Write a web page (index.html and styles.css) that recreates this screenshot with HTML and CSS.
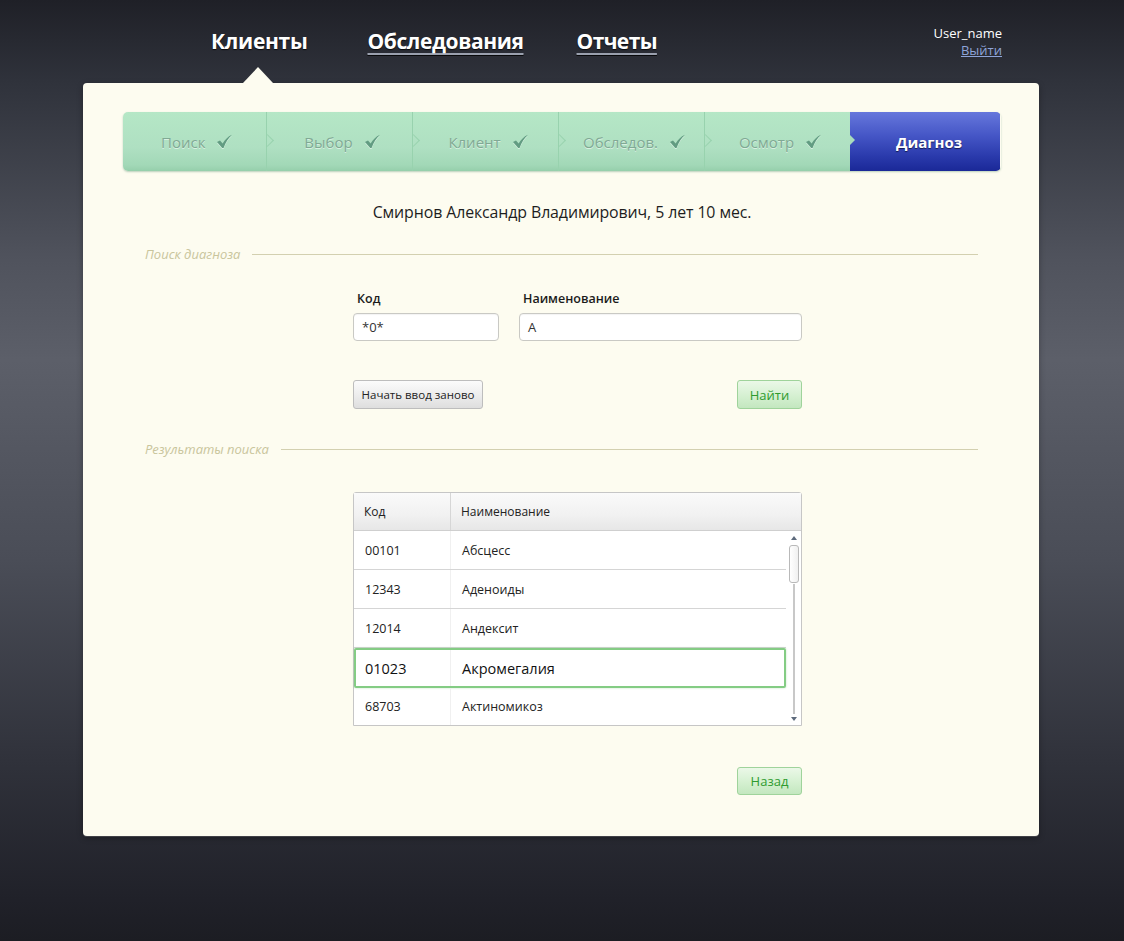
FILE: index.html
```html
<!DOCTYPE html>
<html lang="ru">
<head>
<meta charset="utf-8">
<title>Диагноз</title>
<link rel="stylesheet" href="styles.css">
</head>
<body>
<header class="top">
  <nav class="nav">
    <a class="nav-item active">Клиенты</a>
    <a class="nav-item link">Обследования</a>
    <a class="nav-item link">Отчеты</a>
  </nav>
  <div class="user">
    <div class="user-name">User_name</div>
    <a class="logout">Выйти</a>
  </div>
</header>

<main class="card">
  <div class="steps">
    <div class="step done first"><span>Поиск</span><svg class="check" viewBox="0 0 18 16"><path d="M1 8.5 L4.2 6.8 L7 10.2 C9.5 6 12.5 2.8 17 0.8 C13 4.5 10.2 9 8 15 L6.6 15 Z"/></svg></div>
    <div class="step done"><span>Выбор</span><svg class="check" viewBox="0 0 18 16"><path d="M1 8.5 L4.2 6.8 L7 10.2 C9.5 6 12.5 2.8 17 0.8 C13 4.5 10.2 9 8 15 L6.6 15 Z"/></svg></div>
    <div class="step done"><span>Клиент</span><svg class="check" viewBox="0 0 18 16"><path d="M1 8.5 L4.2 6.8 L7 10.2 C9.5 6 12.5 2.8 17 0.8 C13 4.5 10.2 9 8 15 L6.6 15 Z"/></svg></div>
    <div class="step done"><span>Обследов.</span><svg class="check" viewBox="0 0 18 16"><path d="M1 8.5 L4.2 6.8 L7 10.2 C9.5 6 12.5 2.8 17 0.8 C13 4.5 10.2 9 8 15 L6.6 15 Z"/></svg></div>
    <div class="step done"><span>Осмотр</span><svg class="check" viewBox="0 0 18 16"><path d="M1 8.5 L4.2 6.8 L7 10.2 C9.5 6 12.5 2.8 17 0.8 C13 4.5 10.2 9 8 15 L6.6 15 Z"/></svg></div>
    <div class="step current"><span>Диагноз</span></div>
  </div>

  <h1 class="patient">Смирнов Александр Владимирович, 5 лет 10 мес.</h1>

  <div class="legend"><span>Поиск диагноза</span></div>

  <form class="search">
    <div class="fields">
      <label class="field code">
        <span class="label">Код</span>
        <span class="input">*0*</span>
      </label>
      <label class="field name">
        <span class="label">Наименование</span>
        <span class="input">А</span>
      </label>
    </div>
    <div class="actions">
      <button type="button" class="btn gray">Начать ввод заново</button>
      <button type="button" class="btn green">Найти</button>
    </div>
  </form>

  <div class="legend second"><span>Результаты поиска</span></div>

  <div class="grid">
    <div class="grid-head">
      <div class="c-code">Код</div>
      <div class="c-name">Наименование</div>
    </div>
    <div class="grid-body">
      <div class="rows">
        <div class="row"><div class="c-code">00101</div><div class="c-name">Абсцесс</div></div>
        <div class="row"><div class="c-code">12343</div><div class="c-name">Аденоиды</div></div>
        <div class="row"><div class="c-code">12014</div><div class="c-name">Андексит</div></div>
        <div class="row selected"><div class="c-code">01023</div><div class="c-name">Акромегалия</div></div>
        <div class="row last"><div class="c-code">68703</div><div class="c-name">Актиномикоз</div></div>
      </div>
      <div class="scrollbar">
        <span class="arrow up"></span>
        <span class="thumb"></span>
        <span class="track"></span>
        <span class="arrow down"></span>
      </div>
    </div>
  </div>

  <div class="bottom">
    <button type="button" class="btn green">Назад</button>
  </div>
</main>
</body>
</html>
```

FILE: styles.css
```css
* { box-sizing: border-box; }

html, body { height: 100%; }

body {
  margin: 0;
  min-height: 941px;
  font-family: "Open Sans", "Noto Sans", sans-serif;
  background: linear-gradient(180deg, #1f2027 0px, #2f323b 80px, #50535d 260px, #5c5f69 360px, #4a4d57 560px, #30323b 760px, #202129 900px, #1c1d23 941px);
}

.top {
  height: 83px;
  display: flex;
  justify-content: space-between;
  padding: 0 122px 0 211px;
}

.nav {
  display: flex;
  align-items: flex-start;
  padding-top: 25px;
}

.nav-item {
  position: relative;
  font-family: "Open Sans", sans-serif;
  font-weight: 700;
  font-size: 21px;
  letter-spacing: -0.3px;
  color: #ffffff;
  text-shadow: 0 1px 1px rgba(0,0,0,0.8);
  line-height: 32px;
}

.nav-item.active { margin-right: 60px; }
.nav-item:nth-child(2) { margin-right: 53px; letter-spacing: -0.4px; }
.nav-item:nth-child(3) { letter-spacing: -0.6px; }

.nav-item.link {
  text-decoration: underline;
  text-decoration-color: #9aa0ae;
  text-decoration-thickness: 2px;
  text-underline-offset: 4px;
}

.nav-item.active::after {
  content: "";
  position: absolute;
  left: 32px;
  top: 42px;
  border-left: 15px solid transparent;
  border-right: 15px solid transparent;
  border-bottom: 16px solid #fdfcf0;
}

.user {
  padding-top: 25px;
  text-align: right;
  font-size: 13px;
  line-height: 17px;
}

.user-name { color: #ffffff; }

.logout {
  color: #8ea4d9;
  text-decoration: underline;
}

.card {
  width: 956px;
  margin-left: 83px;
  background: #fdfcf0;
  border-radius: 4px;
  padding: 29px 38px 41px 40px;
  box-shadow: 0 1px 0 rgba(255,255,255,0.15), 0 2px 6px rgba(0,0,0,0.3);
}

/* steps */
.steps {
  display: flex;
  height: 59px;
  border-radius: 5px;
  overflow: hidden;
  box-shadow: 0 1px 2px rgba(60,120,90,0.35);
}

.step {
  position: relative;
  width: 146px;
  display: flex;
  align-items: center;
  justify-content: center;
  gap: 11px;
  font-size: 15px;
  padding-left: 6px;
}

.step.done {
  background: linear-gradient(180deg, #b5e7c6 0%, #afe0c2 60%, #a2d8b7 90%, #95cfab 100%);
  color: #80a994;
  text-shadow: 0 1px 0 rgba(255,255,255,0.55);
  border-left: 1px solid #98d2ae;
}

.step.done.first { border-left: none; width: 143px; padding-left: 38px; justify-content: flex-start; }

.step.done + .step.done::before {
  content: "";
  position: absolute;
  left: -4px;
  top: 24px;
  width: 8px;
  height: 8px;
  border-top: 1px solid #98d2ae;
  border-right: 1px solid #98d2ae;
  transform: rotate(45deg);
  z-index: 2;
}

.step.current {
  width: 150px;
  background: linear-gradient(180deg, #6677dc 0%, #4556c6 40%, #2a3aac 75%, #1a2897 100%);
  color: #ffffff;
  font-weight: 700;
  text-shadow: 0 1px 1px rgba(0,0,20,0.6);
  padding-left: 8px;
}

.step.current::before {
  content: "";
  position: absolute;
  left: 0;
  top: 23px;
  width: 0;
  height: 0;
  border-top: 5px solid transparent;
  border-bottom: 5px solid transparent;
  border-left: 5px solid #a9ddbc;
}

.check {
  width: 17px;
  height: 15px;
  fill: #629c82;
  filter: drop-shadow(0 1px 0 rgba(255,255,255,0.5));
}

.patient {
  margin: 30px 0 0;
  text-align: center;
  font-weight: 400;
  font-size: 15.9px;
  line-height: 22px;
  color: #1e1e1e;
  letter-spacing: -0.1px;
}

.legend {
  margin: 22px 23px 0 22px;
  display: flex;
  align-items: center;
  gap: 12px;
  height: 18px;
  font-size: 13px;
  font-style: italic;
  color: #c9c59c;
}

.legend::after {
  content: "";
  flex: 1;
  height: 1px;
  background: #d3d0b0;
}

.legend.second { margin-top: 31px; }

.search {
  width: 449px;
  margin: 28px 0 0 230px;
}

.fields {
  display: flex;
  gap: 20px;
}

.field { display: flex; flex-direction: column; gap: 6px; }
.field.code { width: 146px; }
.field.name { flex: 1; }

.label {
  font-size: 12.5px;
  font-weight: 600;
  line-height: 16px;
  padding-left: 4px;
  color: #1b1b1b;
}

.input {
  height: 28px;
  background: #ffffff;
  border: 1px solid #c9c9c4;
  border-radius: 4px;
  padding: 0 8px;
  font-size: 13px;
  line-height: 26px;
  color: #333;
  box-shadow: inset 0 1px 1px rgba(0,0,0,0.05);
}

.actions {
  display: flex;
  justify-content: space-between;
  margin-top: 39px;
}

.btn {
  font-family: "Open Sans", sans-serif;
  height: 29px;
  border-radius: 3px;
  cursor: pointer;
  padding: 0;
}

.btn.gray {
  width: 130px;
  font-size: 11.5px;
  color: #222;
  border: 1px solid #bdbdbd;
  background: linear-gradient(180deg, #fbfbfb 0%, #ececec 55%, #dedede 100%);
}

.btn.green {
  width: 65px;
  font-size: 13px;
  color: #2f9b2f;
  border: 1px solid #9fd39b;
  background: linear-gradient(180deg, #ebf8e8 0%, #d5f0d1 55%, #c3e7bf 100%);
}

.grid {
  width: 449px;
  margin: 34px 0 0 230px;
  border: 1px solid #c6c6c6;
  border-radius: 3px 3px 0 0;
  background: #ffffff;
}

.grid-head {
  display: flex;
  height: 38px;
  background: linear-gradient(180deg, #fafafa 0%, #f1f1f1 60%, #e7e7e7 100%);
  border-bottom: 1px solid #cfcfcf;
  font-size: 12px;
  color: #222;
}

.grid-head .c-code {
  width: 97px;
  border-right: 1px solid #d6d6d6;
  padding-left: 10px;
  line-height: 37px;
}

.grid-head .c-name { padding-left: 10px; line-height: 37px; }

.grid-body {
  display: flex;
  height: 194px;
}

.rows { flex: 1; }

.row {
  display: flex;
  height: 39px;
  border-bottom: 1px solid #d5d5d5;
  font-size: 12.5px;
  color: #222;
  align-items: center;
}

.row .c-code {
  width: 97px;
  height: 100%;
  display: flex;
  align-items: center;
  padding-left: 11px;
  border-right: 1px solid #f0f0f0;
}

.row .c-name { padding-left: 11px; }

.row.selected {
  height: 40px;
  border: 2px solid #84cc84;
  border-radius: 2px;
  font-size: 14.5px;
  box-shadow: 0 0 2px rgba(80,180,80,0.4);
  color: #111;
}

.row.selected .c-code { width: 95px; padding-left: 9px; }

.row.last { border-bottom: none; height: 37px; }

.scrollbar {
  width: 15px;
  display: flex;
  flex-direction: column;
  align-items: center;
  padding: 3px 0 2px;
}

.arrow {
  width: 0;
  height: 0;
  border-left: 3px solid transparent;
  border-right: 3px solid transparent;
}

.arrow.up { border-bottom: 4px solid #5d6a7c; margin-top: 2px; }
.arrow.down { border-top: 4px solid #5d6a7c; margin-bottom: 2px; }

.thumb {
  width: 10px;
  height: 38px;
  margin-top: 5px;
  border: 1px solid #b9b9b9;
  border-radius: 3px;
  background: linear-gradient(90deg, #ffffff, #f0f0f0);
}

.track {
  flex: 1;
  width: 2px;
  background: #c8c8c8;
  margin: 1px 0 3px;
}

.bottom {
  width: 449px;
  margin: 41px 0 0 230px;
  display: flex;
  justify-content: flex-end;
}

.bottom .btn { height: 28px; }
```
